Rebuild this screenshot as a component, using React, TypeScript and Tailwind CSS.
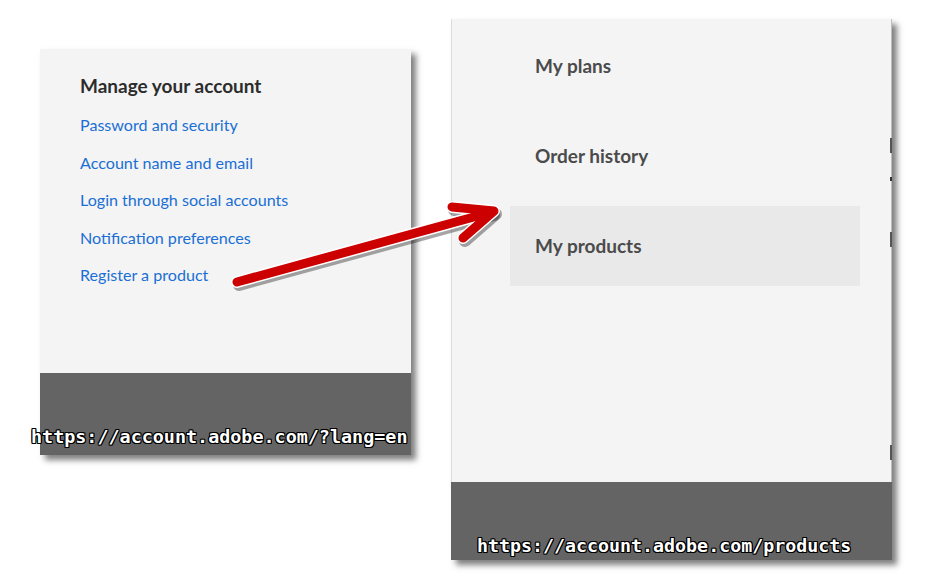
import React from "react";

const urlShadow =
  "[text-shadow:1px_0_0_#000,-1px_0_0_#000,0_1px_0_#000,0_-1px_0_#000,1px_1px_0_#000,-1px_-1px_0_#000,1px_-1px_0_#000,-1px_1px_0_#000]";

function LeftPanel() {
  const links = [
    "Password and security",
    "Account name and email",
    "Login through social accounts",
    "Notification preferences",
    "Register a product",
  ];
  return (
    <div className="mt-[49px] w-[371px] flex flex-col shadow-[5px_5px_6px_rgba(0,0,0,0.5)]">
      <div className="h-[324px] bg-[#f4f4f4] pl-[40px] pt-[25px] font-['Lato',sans-serif]">
        <div className="text-[19px] leading-[24px] font-bold text-[#2c2c2c] mb-[8px]">
          Manage your account
        </div>
        {links.map((l) => (
          <div key={l} className="text-[16.1px] leading-[37.5px] text-[#1a6fd4]">
            {l}
          </div>
        ))}
      </div>
      <div className="h-[82px] bg-[#646464] flex items-end pb-[6px]">
        <span
          className={`-ml-[9px] font-['DejaVu_Sans_Mono',monospace] font-bold text-[18.4px] leading-[24px] text-white whitespace-nowrap ${urlShadow}`}
        >
          https://account.adobe.com/?lang=en
        </span>
      </div>
    </div>
  );
}

function RightPanel() {
  const items = ["My plans", "Order history", "My products"];
  return (
    <div className="relative mt-[19px] w-[441px] flex flex-col shadow-[5px_5px_6px_rgba(0,0,0,0.5)]">
      <div className="h-[463px] bg-[#f4f4f4] border-l border-[#dcdcdc] border-r border-r-[#bdbdbd] pt-[7px] pl-[58px] pr-[31px] flex flex-col gap-[10px] font-['Lato',sans-serif]">
        {items.map((it, i) => (
          <div
            key={it}
            className={`h-[80px] flex items-center pl-[25px] text-[19px] font-bold text-[#4b4b4b] ${
              i === 2 ? "bg-[#e9e9e9]" : ""
            }`}
          >
            {it}
          </div>
        ))}
      </div>
      <div className="h-[78px] bg-[#646464] flex items-end pb-[2px] pl-[26px]">
        <span
          className={`font-['DejaVu_Sans_Mono',monospace] font-bold text-[18.3px] leading-[24px] text-white whitespace-nowrap ${urlShadow}`}
        >
          https://account.adobe.com/products
        </span>
      </div>
      <span className="absolute left-[439px] top-[119px] w-[2px] h-[15px] bg-[#555]" />
      <span className="absolute left-[439px] top-[158px] w-[2px] h-[4px] bg-[#333]" />
      <span className="absolute left-[439px] top-[213px] w-[2px] h-[15px] bg-[#555]" />
      <span className="absolute left-[439px] top-[426px] w-[2px] h-[15px] bg-[#555]" />
    </div>
  );
}

function Arrow() {
  return (
    <svg
      className="absolute left-0 top-0 pointer-events-none"
      width="952"
      height="582"
      viewBox="0 0 952 582"
    >
      <g fill="none" strokeLinecap="round" strokeLinejoin="round">
        <g transform="translate(2 3)" stroke="rgba(0,0,0,0.35)" strokeWidth="12">
          <path d="M237 282 L492 212" />
          <path d="M452 207 L494 211 L463 238" />
        </g>
        <g stroke="#ffffff" strokeWidth="12">
          <path d="M237 282 L492 212" />
          <path d="M452 207 L494 211 L463 238" />
        </g>
        <g stroke="#cc0000" strokeWidth="9">
          <path d="M237 282 L492 212" />
          <path d="M452 207 L494 211 L463 238" />
        </g>
      </g>
    </svg>
  );
}

export default function App() {
  return (
    <div className="relative w-[952px] h-[582px] bg-white overflow-hidden">
      <div className="flex items-start pl-[40px] gap-[40px]">
        <LeftPanel />
        <RightPanel />
      </div>
      <Arrow />
    </div>
  );
}
